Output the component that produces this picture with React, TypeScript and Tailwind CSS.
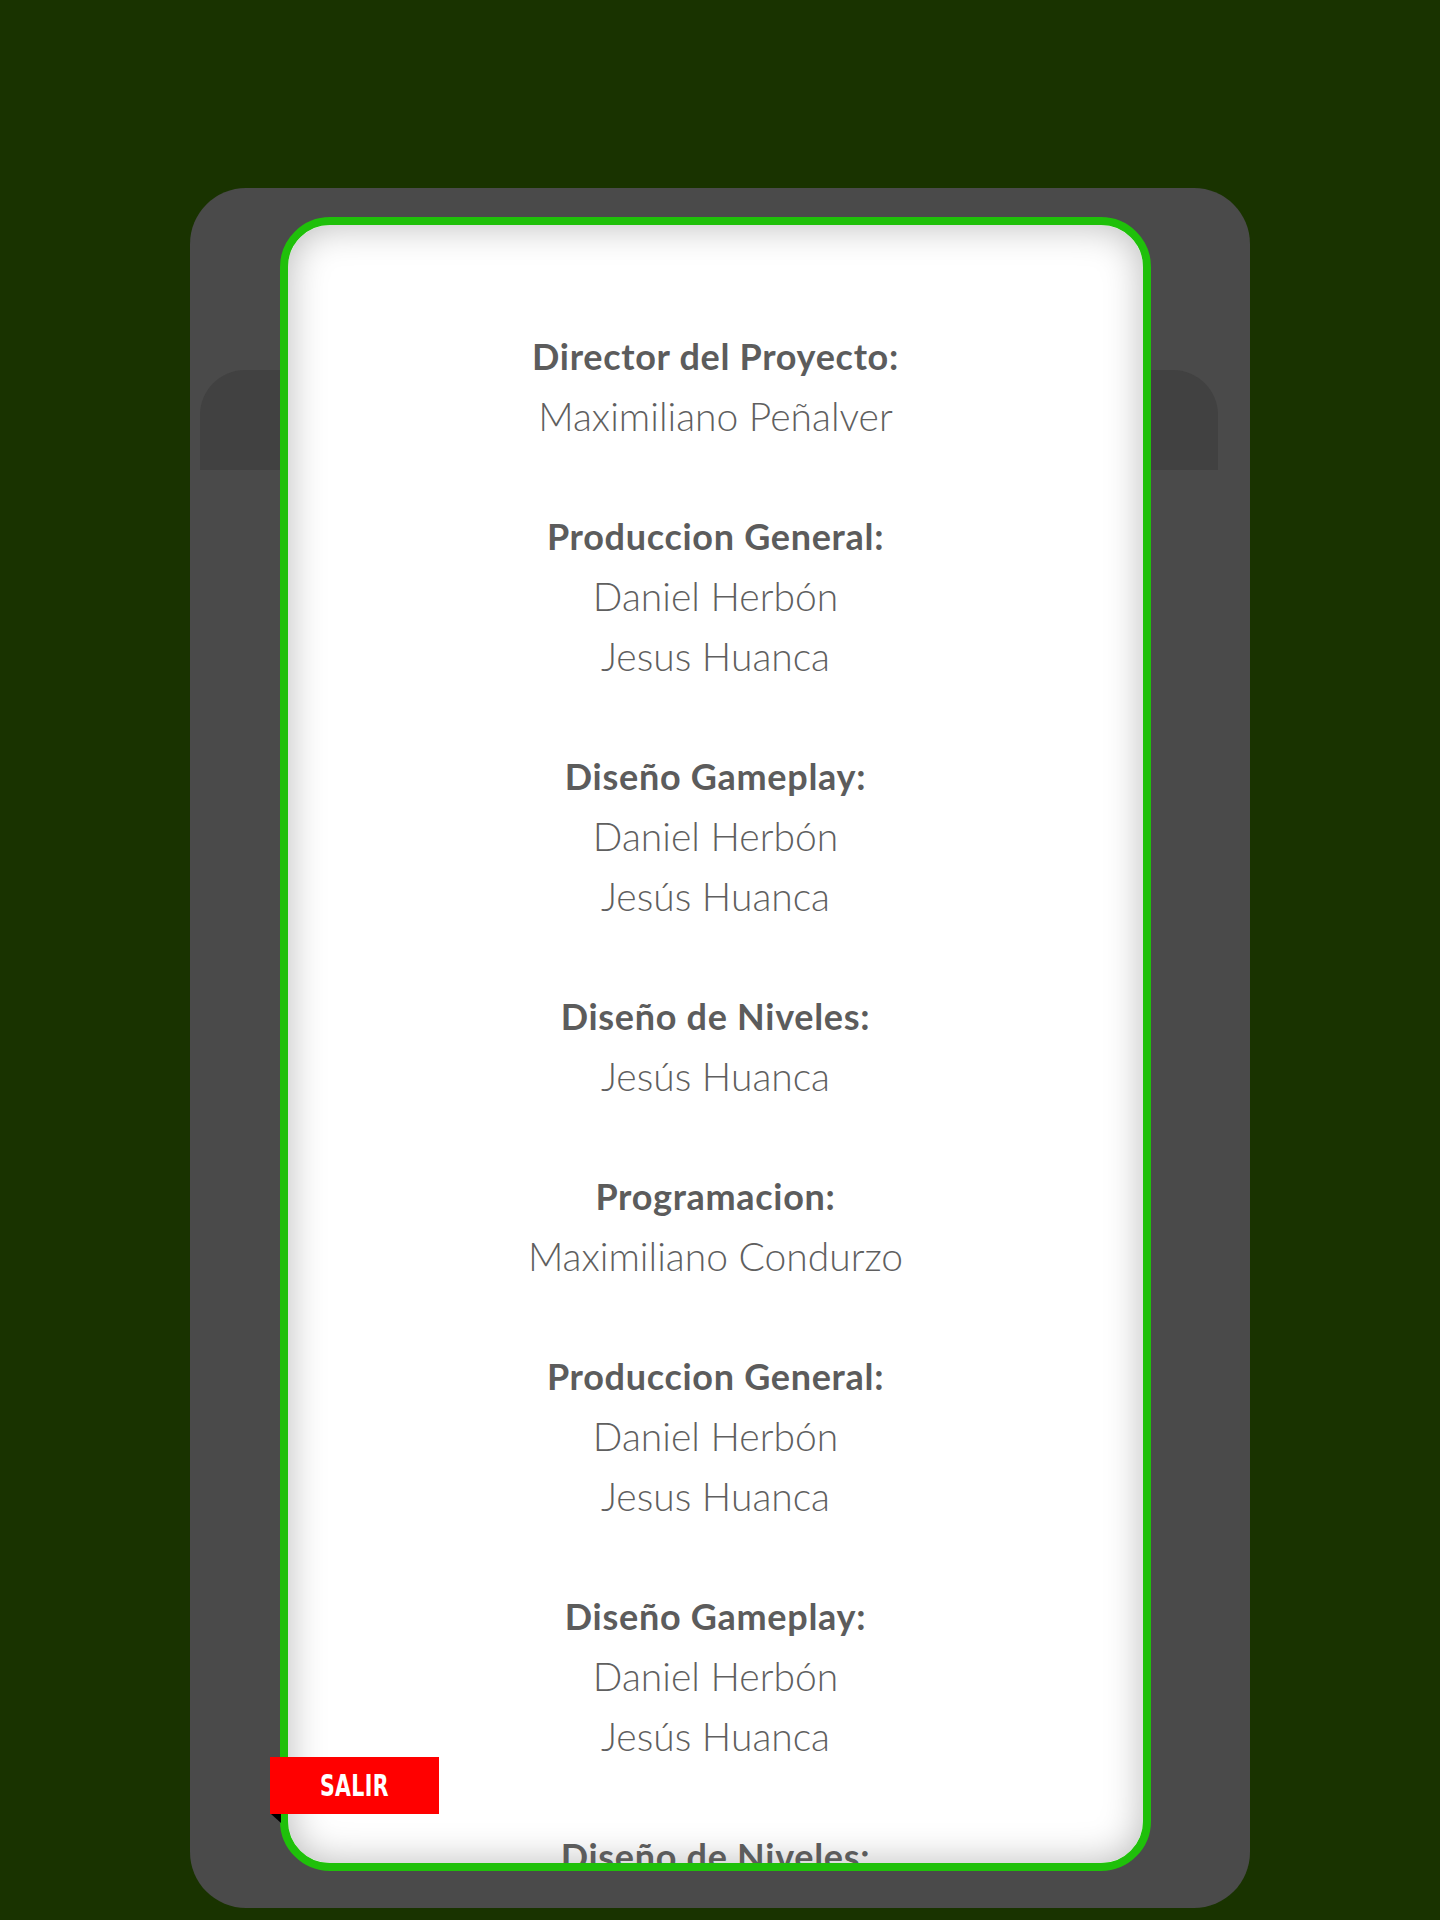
import React from 'react';

type Credit = {
  role: string;
  names: string[];
};

const credits: Credit[] = [
  { role: 'Director del Proyecto:', names: ['Maximiliano Peñalver'] },
  { role: 'Produccion General:', names: ['Daniel Herbón', 'Jesus Huanca'] },
  { role: 'Diseño Gameplay:', names: ['Daniel Herbón', 'Jesús Huanca'] },
  { role: 'Diseño de Niveles:', names: ['Jesús Huanca'] },
  { role: 'Programacion:', names: ['Maximiliano Condurzo'] },
  { role: 'Produccion General:', names: ['Daniel Herbón', 'Jesus Huanca'] },
  { role: 'Diseño Gameplay:', names: ['Daniel Herbón', 'Jesús Huanca'] },
  { role: 'Diseño de Niveles:', names: ['Jesús Huanca'] },
  { role: 'Programacion:', names: ['Maximiliano Condurzo'] },
];

const CreditBlock = ({ role, names }: Credit) => (
  <div className="flex flex-col items-center pb-[60px]">
    <p className="h-[60px] leading-[60px] text-[36px] font-bold text-[#5c5c5c] tracking-[0.7px]">{role}</p>
    {names.map((name, i) => (
      <p key={i} className="h-[60px] leading-[60px] text-[39px] font-light text-[#5f5f5f]">
        {name}
      </p>
    ))}
  </div>
);

const App = () => {
  return (
    <div className="min-h-[1920px] w-full bg-[#193300] pt-[188px] pl-[190px]" style={{ fontFamily: 'Lato, "Open Sans", sans-serif' }}>
      <div className="relative grid w-[1060px] h-[1720px] rounded-[56px] bg-[#4a4a4a]">
        {/* back tab */}
        <div className="col-start-1 row-start-1 self-start ml-[10px] mt-[182px] w-[1018px] h-[100px] rounded-t-[45px] bg-[#414141]" />

        {/* credits card */}
        <div className="col-start-1 row-start-1 self-start ml-[90px] mt-[29px] w-[871px] h-[1654px] rounded-[50px] border-[8px] border-[#1fc00a] bg-white overflow-hidden">
          <div className="h-full w-full rounded-[42px] shadow-[inset_0_0_38px_rgba(0,0,0,0.28)] overflow-hidden">
            <div className="flex flex-col items-center pt-[101px]">
              {credits.map((c, i) => (
                <CreditBlock key={i} role={c.role} names={c.names} />
              ))}
            </div>
          </div>
        </div>

        {/* exit button */}
        <button className="absolute left-[80px] top-[1569px] w-[169px] h-[57px] bg-[#ff0000] flex items-center justify-center text-white" style={{ fontFamily: '"DejaVu Sans Condensed", "DejaVu Sans", sans-serif' }}>
          <span className="inline-block text-[30px] font-bold leading-none scale-x-[0.76] tracking-[0.5px]">SALIR</span>
        </button>
        <svg className="absolute left-[81px] top-[1626px]" width="10" height="9" viewBox="0 0 10 9">
          <polygon points="0,0 10,0 10,9" fill="#000" />
        </svg>
      </div>
    </div>
  );
};

export default App;
